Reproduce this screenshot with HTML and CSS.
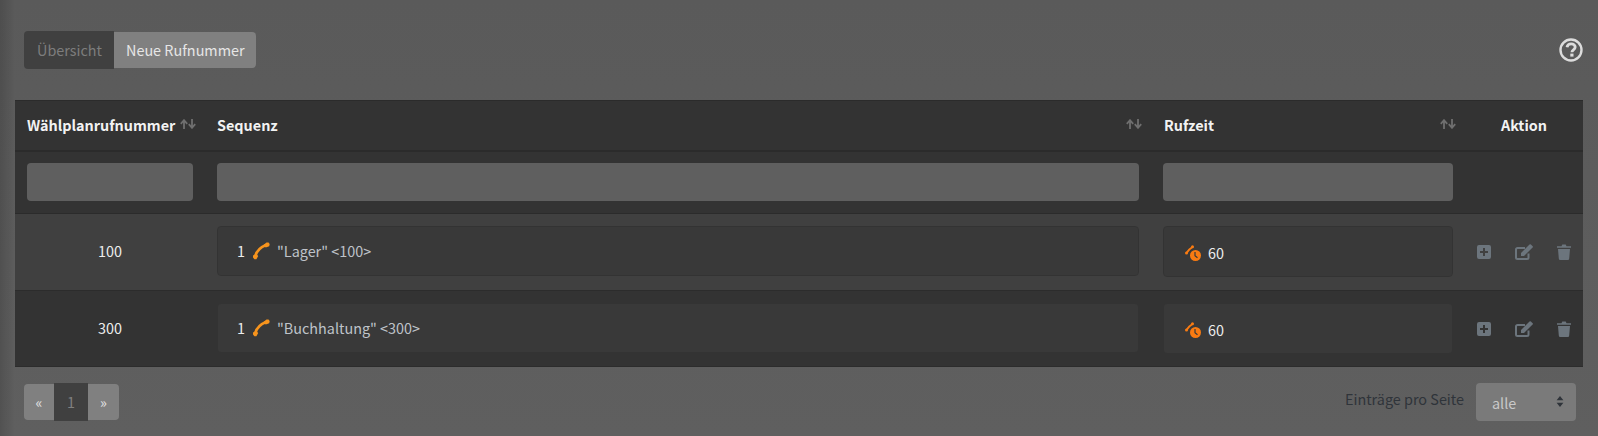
FILE: index.html
```html
<!DOCTYPE html>
<html lang="de">
<head>
<meta charset="utf-8">
<title>Wählplan</title>
<link rel="stylesheet" href="styles.css">
</head>
<body>
<svg class="defs" width="0" height="0" aria-hidden="true">
  <symbol id="sort" viewBox="0 0 16 10">
    <path d="M4 10V1.500M.8 4.800 4 1.200l3.200 3.600" fill="none" stroke="currentColor" stroke-width="1.800"/>
    <path d="M12 0v8.500M8.800 5.200 12 8.800l3.200-3.600" fill="none" stroke="currentColor" stroke-width="1.800"/>
  </symbol>
  <symbol id="phone" viewBox="0 0 18 18">
    <path d="M3.500 13.500C4.500 10 8 5.500 14 3" fill="none" stroke="currentColor" stroke-width="2.700"/>
    <path d="M1 13.500l3.200-1.800 2 2.300-1.800 3.200h-2L1 15.500zM11.500 3l3-2.600h2l1.200 1.600-.5 2.200-3.500 1.300z" fill="currentColor"/>
  </symbol>
  <symbol id="ringtime" viewBox="0 0 16 16">
    <path d="M1.500 8C3 5.500 5 3.500 7.500 2" fill="none" stroke="currentColor" stroke-width="2"/>
    <circle cx="1.500" cy="8" r="1.500" fill="currentColor"/>
    <circle cx="7.500" cy="1.700" r="1.500" fill="currentColor"/>
    <circle cx="10.500" cy="10.500" r="5.500" fill="currentColor"/>
    <path d="M10 7v3.800l2.500 2" fill="none" stroke="#393939" stroke-width="1.200"/>
  </symbol>
  <symbol id="plus" viewBox="0 0 14 14">
    <path fill-rule="evenodd" d="M2 0h10a2 2 0 0 1 2 2v10a2 2 0 0 1-2 2H2a2 2 0 0 1-2-2V2a2 2 0 0 1 2-2zM6 3v3H3v2h3v3h2V8h3V6H8V3z" fill="currentColor"/>
  </symbol>
  <symbol id="edit" viewBox="0 0 18 16">
    <path d="M13.500 9.500V13.500a1.500 1.500 0 0 1-1.500 1.500H2.500A1.500 1.500 0 0 1 1 13.500V5.500A1.500 1.500 0 0 1 2.500 4H10" fill="none" stroke="currentColor" stroke-width="2"/>
    <path d="M6 12V9L14.500 .500a1 1 0 0 1 1.400 0L17.600 2.200a1 1 0 0 1 0 1.400L9 12z" fill="currentColor"/>
  </symbol>
  <symbol id="trash" viewBox="0 0 14 16">
    <path d="M0 2.200h4.500L5.300.5h3.400l.8 1.700H14v1.600H0zM1 5h12l-.8 9.500a1.500 1.500 0 0 1-1.500 1.500H3.300a1.500 1.500 0 0 1-1.500-1.500z" fill="currentColor"/>
  </symbol>
  <symbol id="help" viewBox="0 0 24 24">
    <circle cx="12" cy="12" r="10.500" fill="none" stroke="currentColor" stroke-width="2.400"/>
    <path d="M8 9.300C8.300 7 10 5.800 12.200 5.800c2.300 0 4 1.400 4 3.300 0 2.800-3.300 2.800-3.300 5.200" fill="none" stroke="currentColor" stroke-width="2.800"/>
    <rect x="11.300" y="15.600" width="3.200" height="3" fill="currentColor"/>
  </symbol>
</svg>

<header class="topbar">
  <nav class="tabs">
    <a class="tab tab-active">Übersicht</a>
    <a class="tab tab-new">Neue Rufnummer</a>
  </nav>
  <svg class="help"><use href="#help"/></svg>
</header>

<table class="grid">
  <colgroup>
    <col class="c1"><col class="c2"><col class="c3"><col class="c4">
  </colgroup>
  <thead>
    <tr class="head">
      <th><div class="th-in"><span>Wählplanrufnummer</span><svg class="sort"><use href="#sort"/></svg></div></th>
      <th><div class="th-in"><span>Sequenz</span><svg class="sort"><use href="#sort"/></svg></div></th>
      <th><div class="th-in"><span class="th-shift">Rufzeit</span><svg class="sort"><use href="#sort"/></svg></div></th>
      <th class="th-action">Aktion</th>
    </tr>
    <tr class="filters">
      <td><div class="filter"></div></td>
      <td><div class="filter"></div></td>
      <td><div class="filter"></div></td>
      <td></td>
    </tr>
  </thead>
  <tbody>
    <tr class="row row-odd">
      <td class="num">100</td>
      <td class="cell-box"><div class="box"><span class="pos">1</span><svg class="ic-phone"><use href="#phone"/></svg><span class="name">"Lager" &lt;100&gt;</span></div></td>
      <td class="cell-box"><div class="box box-time"><svg class="ic-time"><use href="#ringtime"/></svg><span class="secs">60</span></div></td>
      <td><div class="actions"><svg class="ic-plus"><use href="#plus"/></svg><svg class="ic-edit"><use href="#edit"/></svg><svg class="ic-trash"><use href="#trash"/></svg></div></td>
    </tr>
    <tr class="row row-even">
      <td class="num">300</td>
      <td class="cell-box"><div class="box"><span class="pos">1</span><svg class="ic-phone"><use href="#phone"/></svg><span class="name">"Buchhaltung" &lt;300&gt;</span></div></td>
      <td class="cell-box"><div class="box box-time"><svg class="ic-time"><use href="#ringtime"/></svg><span class="secs">60</span></div></td>
      <td><div class="actions"><svg class="ic-plus"><use href="#plus"/></svg><svg class="ic-edit"><use href="#edit"/></svg><svg class="ic-trash"><use href="#trash"/></svg></div></td>
    </tr>
  </tbody>
</table>

<footer class="bottombar">
  <nav class="pager">
    <a class="pg">«</a>
    <a class="pg pg-cur">1</a>
    <a class="pg">»</a>
  </nav>
  <div class="perpage">
    <span class="perpage-label">Einträge pro Seite</span>
    <div class="select"><span>alle</span>
      <svg class="updown" viewBox="0 0 8 13"><path d="M4 0l4 5H0zM4 13L0 8h8z" fill="currentColor"/></svg>
    </div>
  </div>
</footer>
</body>
</html>
```

FILE: styles.css
```css
* { box-sizing: border-box; }
body {
  margin: 0;
  height: 436px;
  overflow: hidden;
  padding: 0 15px;
  background-color: #5d5d5d;
  background-image:
    linear-gradient(to right, rgba(0, 0, 0, 0.14) 0, rgba(0, 0, 0, 0) 15px),
    linear-gradient(to bottom, #5a5a5a 0, #5f5f5f 100%);
  font-family: "Noto Sans CJK SC", "Noto Sans", sans-serif;
  font-size: 14.4px;
  line-height: 20px;
  color: #d6d6d6;
}
.defs { position: absolute; }

.topbar {
  height: 100px;
  display: flex;
  align-items: flex-start;
  justify-content: space-between;
  padding: 31px 0 0 9px;
}
.tabs { display: flex; height: 38px; }
.tab {
  display: flex;
  align-items: center;
  padding: 0 0 0 13px;
  white-space: nowrap;
}
.tab-active {
  width: 90px;
  background: #404040;
  color: #7d7d7d;
  border-radius: 4px 0 0 4px;
}
.tab-new {
  width: 142px;
  padding-left: 12px;
  margin: 1px 0;
  background: #808080;
  color: #e6e6e6;
  border-radius: 0 4px 4px 0;
}
.help {
  width: 24px;
  height: 24px;
  margin: 7px 0 0 0;
  color: #dcdcdc;
}

.grid {
  width: 1568px;
  border-collapse: collapse;
  table-layout: fixed;
}
.c1 { width: 190px; }
.c2 { width: 946px; }
.c3 { width: 314px; }
.c4 { width: 118px; }

.grid th, .grid td { padding: 0 12px; }
.head {
  height: 50px;
  background: #333333;
  border-top: 1px solid #2b2b2b;
  border-bottom: 2px solid #2b2b2b;
}
.head th {
  text-align: left;
  font-weight: 700;
  color: #f2f2f2;
}
.th-in { display: flex; justify-content: space-between; align-items: center; }
.th-shift { margin-left: 1px; }
.sort { flex: none; width: 16px; height: 10px; color: #6f6f6f; margin: -3px -3px 0 0; }
.grid th.th-action { text-align: center; }

.filters {
  height: 63px;
  background: #333333;
  border-bottom: 1px solid #2b2b2b;
}
.filter {
  height: 38px;
  background: #5f5f5f;
  border-radius: 4px;
}

.row { border-bottom: 1px solid #2c2c2c; }
.row-odd { height: 77px; background: #404040; }
.row-even { height: 76px; background: #333333; }
.num { text-align: center; color: #ededed; }
.grid td.num { padding-bottom: 2px; }
.grid td.cell-box { vertical-align: top; padding-top: 12px; }
.box {
  display: flex;
  align-items: center;
  height: 50px;
  padding: 0 0 0 19px;
  background: #393939;
  background-clip: padding-box;
  border: 1px solid #333333;
  border-radius: 4px;
}
.row-even .box { border-color: transparent; }
.box-time { height: 51px; padding: 2px 0 0 21px; }
.pos { color: #ededed; width: 15px; }
.ic-phone { flex: none; width: 18px; height: 18px; color: #f7941d; margin: 0 7px 0 0; }
.name { color: #bfc3c9; }
.ic-time { flex: none; width: 16px; height: 16px; color: #f97b12; margin: 0 7px 0 0; }
.secs { color: #ededed; }

.actions { display: flex; align-items: center; color: #6c757d; height: 20px; }
.ic-plus { flex: none; width: 14px; height: 14px; }
.ic-edit { flex: none; width: 18px; height: 16px; margin: 0 0 0 24px; }
.ic-trash { flex: none; width: 14px; height: 16px; margin: 0 0 0 24px; }

.bottombar {
  display: flex;
  justify-content: space-between;
  align-items: flex-start;
  padding: 16px 0 0 9px;
}
.pager { display: flex; height: 38px; align-items: center; }
.pg {
  width: 30px;
  height: 36px;
  display: flex;
  align-items: center;
  justify-content: center;
  background: #808080;
  color: #e0e0e0;
  border-radius: 4px 0 0 4px;
}
.pg:last-child { width: 31px; border-radius: 0 4px 4px 0; }
.pg.pg-cur { width: 34px; height: 38px; background: #404040; color: #808080; border-radius: 0; }

.perpage { display: flex; align-items: flex-start; margin-right: 7px; }
.perpage-label { color: #2f343a; line-height: 31px; height: 36px; margin-right: 12px; }
.select {
  width: 100px;
  height: 38px;
  display: flex;
  align-items: center;
  justify-content: space-between;
  padding: 2px 12px 0 16px;
  background: #7a7a7a;
  border-radius: 4px;
  color: #c9c9c9;
}
.updown { width: 8px; height: 11px; color: #2f343a; margin-top: -3px; }
```
